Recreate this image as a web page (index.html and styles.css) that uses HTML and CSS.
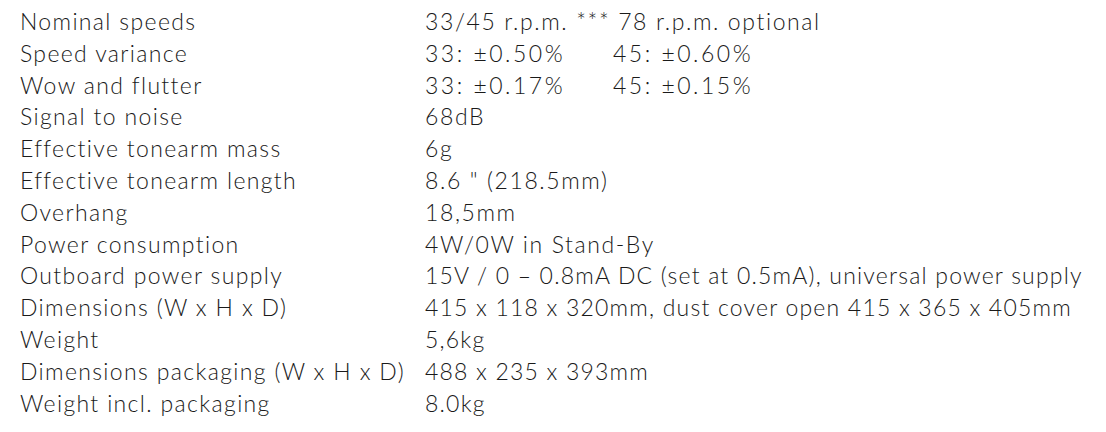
FILE: index.html
```html
<!DOCTYPE html>
<html>
<head>
<meta charset="utf-8">
<link rel="stylesheet" href="styles.css">
</head>
<body>
<div class="specs">
  <div class="label">Nominal speeds</div><div class="value">33/45 r.p.m. *** 78 r.p.m. optional</div>
  <div class="label">Speed variance</div><div class="value pair"><span class="part">33: ±0.50%</span>45: ±0.60%</div>
  <div class="label">Wow and flutter</div><div class="value pair"><span class="part">33: ±0.17%</span>45: ±0.15%</div>
  <div class="label">Signal to noise</div><div class="value">68dB</div>
  <div class="label">Effective tonearm mass</div><div class="value">6g</div>
  <div class="label">Effective tonearm length</div><div class="value">8.6 " (218.5mm)</div>
  <div class="label">Overhang</div><div class="value">18,5mm</div>
  <div class="label">Power consumption</div><div class="value">4W/0W in Stand-By</div>
  <div class="label">Outboard power supply</div><div class="value narrow">15V / 0 – 0.8mA DC (set at 0.5mA), universal power supply</div>
  <div class="label">Dimensions (W x H x D)</div><div class="value narrow">415 x 118 x 320mm, dust cover open 415 x 365 x 405mm</div>
  <div class="label">Weight</div><div class="value narrow">5,6kg</div>
  <div class="label">Dimensions packaging (W x H x D)</div><div class="value narrow">488 x 235 x 393mm</div>
  <div class="label">Weight incl. packaging</div><div class="value narrow">8.0kg</div>
</div>
</body>
</html>
```
FILE: styles.css
```css
html, body {
  margin: 0;
  padding: 0;
  background: #ffffff;
}
body {
  font-family: "Lato", "DejaVu Sans", sans-serif;
  font-weight: 300;
  font-size: 23px;
  color: #1a1a1a;
}
.specs {
  display: grid;
  grid-template-columns: 405px 1fr;
  grid-auto-rows: 31.8px;
  padding: 6px 0 0 20px;
  line-height: 31.8px;
}
.label, .value {
  white-space: nowrap;
}
.label {
  letter-spacing: 1.35px;
}
.value {
  letter-spacing: 1.6px;
}
.value.pair {
  letter-spacing: 2.5px;
}
.value.narrow {
  letter-spacing: 1.2px;
}
.part {
  display: inline-block;
  width: 188px;
}
```
